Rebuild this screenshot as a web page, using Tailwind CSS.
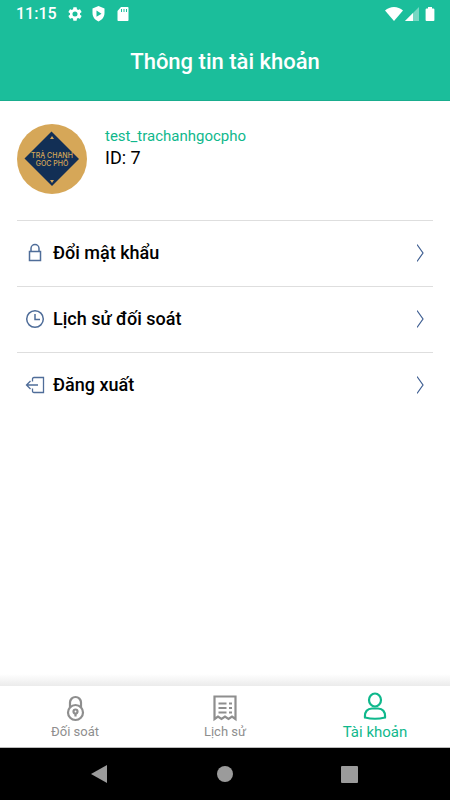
<!DOCTYPE html>
<html lang="vi">
<head>
  <meta charset="UTF-8" />
  <meta name="viewport" content="width=device-width, initial-scale=1.0"/>
  <title>Thông tin tài khoản</title>
  <script src="https://cdn.jsdelivr.net/npm/@tailwindcss/browser@4"></script>
</head>
<body class="min-h-screen flex flex-col bg-white text-black font-[Roboto,sans-serif]">

  <!-- Header -->
  <header class="bg-[#1bbe9b] text-white border-b border-[#19ad8e] pb-6">
    <div class="h-7 pl-4 pr-[14px] flex items-center justify-between">
      <div class="flex items-center">
        <span class="w-10 text-base font-medium">11:15</span>
        <svg class="w-[14px] h-[14px] ml-3" viewBox="2 2 20 20" fill="currentColor"><path d="M19.14 12.94c.04-.3.06-.61.06-.94s-.02-.64-.07-.94l2.03-1.58a.49.49 0 0 0 .12-.61l-1.92-3.32a.49.49 0 0 0-.59-.22l-2.39.96a7 7 0 0 0-1.62-.94l-.36-2.54a.48.48 0 0 0-.48-.41h-3.84a.48.48 0 0 0-.47.41l-.36 2.54c-.59.24-1.13.57-1.62.94l-2.39-.96a.48.48 0 0 0-.59.22L2.74 8.87a.48.48 0 0 0 .12.61l2.03 1.58c-.05.3-.09.63-.09.94s.02.64.07.94l-2.03 1.58a.49.49 0 0 0-.12.61l1.92 3.32c.12.22.37.29.59.22l2.39-.96c.5.38 1.03.7 1.62.94l.36 2.54c.05.24.24.41.48.41h3.84c.24 0 .44-.17.47-.41l.36-2.54a7 7 0 0 0 1.62-.94l2.39.96c.22.08.47 0 .59-.22l1.92-3.32a.48.48 0 0 0-.12-.61zM12 15.6a3.6 3.6 0 1 1 0-7.2 3.6 3.6 0 0 1 0 7.2z"/></svg>
        <svg class="w-[13px] h-4 ml-[10px]" viewBox="0 0 12 16" fill="currentColor"><path fill-rule="evenodd" d="M6 0 0 2.400V7c0 4 2.500 7 6 8.500C9.500 14 12 11 12 7V2.400zM4 4.600 9 7.700 4 10.800z"/></svg>
        <svg class="w-3 h-4 ml-3" viewBox="0 0 12 16" fill="currentColor"><path fill-rule="evenodd" d="M4 1h6.500c.6 0 1 .4 1 1v12c0 .6-.4 1-1 1h-9c-.6 0-1-.4-1-1V5zM4 3v3h1V3zM6.500 3v3h1V3zM9 3v3h1V3z"/></svg>
      </div>
      <div class="flex items-center">
        <svg class="w-[18px] h-4" viewBox="0 0 18 16" fill="currentColor"><path d="M0 4.500C5-.3 13-.3 18 4.500L9 15z"/></svg>
        <svg class="w-4 h-4 ml-px" viewBox="0 0 16 16" fill="currentColor"><path opacity=".4" d="M1 15 15 1v14z"/><path d="M1 15 9 7v8z"/></svg>
        <svg class="w-3 h-4 ml-1" viewBox="0 0 12 16" fill="currentColor"><path d="M4 1h4v1.500h1.500c.5 0 .9.400.9.900v10.800c0 .5-.4.800-.9.800h-7c-.5 0-.9-.3-.9-.8V3.400c0-.5.4-.9.900-.9H4z"/></svg>
      </div>
    </div>
    <h1 class="pt-5 text-center text-[22px] leading-7 font-medium">Thông tin tài khoản</h1>
  </header>

  <main class="flex-1 px-[17px]">
    <!-- Profile -->
    <section class="pt-[23px] pb-[26px] flex gap-[18px]">
      <svg class="w-[70px] h-[70px]" viewBox="0 0 70 70" role="img" aria-label="Trà Chanh Góc Phố">
        <circle cx="35" cy="35" r="35" fill="#d6a758"/>
        <path d="M34.500 7.500 62 35 35 62 7.500 34.500z" fill="#122f55"/>
        <path d="M33 15h4l-2-3zM33 56h4l-2 3z" fill="#d6a758"/>
        <g fill="#d6a758" font-family="Inter, sans-serif" font-weight="500" text-anchor="middle" font-size="7">
          <text x="35" y="34">TRÀ CHANH</text>
          <text x="35" y="42">GÓC PHỐ</text>
        </g>
      </svg>
      <div>
        <p class="text-[15px] leading-6 text-[#0fb88c]">test_trachanhgocpho</p>
        <p class="text-lg leading-5">ID: 7</p>
      </div>
    </section>

    <!-- Menu -->
    <nav>
      <a href="#" class="h-[66px] px-2 pb-[2px] flex items-center border-t border-[#dedede]">
        <svg class="w-5 h-5" viewBox="0 0 20 20" fill="none" stroke="#4f6d99" stroke-width="1.500"><path d="M4.500 8.500h11v9h-11zM6 8.500V5.500a4 4 0 0 1 8 0v3"/></svg>
        <span class="flex-1 ml-2 text-lg font-medium">Đổi mật khẩu</span>
        <svg class="w-2 h-5" viewBox="0 0 8 20" fill="none" stroke="#3f5f92" stroke-width="1.200"><path d="M0 1.500 6 10 0 18.500"/></svg>
      </a>
      <a href="#" class="h-[66px] px-2 pb-[2px] flex items-center border-t border-[#dedede]">
        <svg class="w-5 h-5" viewBox="0 0 20 20" fill="none" stroke="#4f6d99" stroke-width="1.500"><circle cx="10" cy="10" r="8.300"/><path d="M10 5v5.500h5"/></svg>
        <span class="flex-1 ml-2 text-lg font-medium">Lịch sử đối soát</span>
        <svg class="w-2 h-5" viewBox="0 0 8 20" fill="none" stroke="#3f5f92" stroke-width="1.200"><path d="M0 1.500 6 10 0 18.500"/></svg>
      </a>
      <a href="#" class="h-[66px] px-2 pb-[2px] flex items-center border-t border-[#dedede]">
        <svg class="w-5 h-5" viewBox="0 0 20 20" fill="none" stroke="#4f6d99" stroke-width="1.300"><path d="M7.500 6.500V4q0-1.500 1.500-1.500h9.500v15H9q-1.500 0-1.500-1.500v-2.500M13 10H2M5.500 6 1.500 10l4 4"/></svg>
        <span class="flex-1 ml-2 text-lg font-medium">Đăng xuất</span>
        <svg class="w-2 h-5" viewBox="0 0 8 20" fill="none" stroke="#3f5f92" stroke-width="1.200"><path d="M0 1.500 6 10 0 18.500"/></svg>
      </a>
    </nav>
  </main>

  <!-- Bottom tabs -->
  <div class="h-3 bg-linear-to-b from-white to-[#ebebeb]"></div>
  <nav class="h-[62px] grid grid-cols-3 bg-white border-b border-[#bbbbbb] text-[13px] leading-4 text-[#8e8e8e]">
    <a href="#" class="pt-2 flex flex-col items-center">
      <svg class="w-7 h-7" viewBox="0 0 28 28" fill="none" stroke="#8e8e8e" stroke-width="2.200"><circle cx="14.500" cy="18.500" r="7.500"/><path d="M9 14V8.500a5.500 5.500 0 0 1 11 0V14M14.500 19v3.500"/><circle cx="14.500" cy="17.500" r="2"/></svg>
      <span class="mt-[2px]">Đối soát</span>
    </a>
    <a href="#" class="pt-2 flex flex-col items-center">
      <svg class="w-7 h-7" viewBox="0 0 28 28" fill="none" stroke="#8e8e8e" stroke-width="2.200"><path d="M3.500 25V2.500h21V25l-3.500-2.500-3.500 2.500-3.500-2.500-3.500 2.500L7 22.500zM7.500 9.500h8M7.500 14h8M7.500 18.500h8M18 9.500h3M18 14h3M18 18.500h3"/></svg>
      <span class="mt-[2px]">Lịch sử</span>
    </a>
    <a href="#" class="pt-[6px] flex flex-col items-center text-[#0fb88c]">
      <svg class="w-7 h-7" viewBox="0 0 28 28" fill="none" stroke="currentColor" stroke-width="2.200"><ellipse cx="14" cy="8" rx="6" ry="6.500"/><path d="M4 25.500c-.5-6 2.500-9 7-9h6c4.500 0 7.500 3 7 9-6 1.500-14 1.500-20 0z"/></svg>
      <span class="mt-1 text-[15px] leading-4">Tài khoản</span>
    </a>
  </nav>

  <!-- System navigation -->
  <footer class="h-[52px] grid grid-cols-3 place-items-center bg-black text-[#9b9b9b]">
    <button aria-label="Quay lại" class="ml-12">
      <svg class="w-4 h-5" viewBox="0 0 16 20" fill="currentColor"><path d="M0 10 16 1v18z"/></svg>
    </button>
    <button aria-label="Trang chủ"><svg class="w-4 h-4" viewBox="0 0 16 16" fill="currentColor"><circle cx="8" cy="8" r="8"/></svg></button>
    <button aria-label="Gần đây" class="mr-[52px]"><svg class="w-[17px] h-[17px]" viewBox="0 0 17 17" fill="currentColor"><rect width="17" height="17" rx="1"/></svg></button>
  </footer>

</body>
</html>
